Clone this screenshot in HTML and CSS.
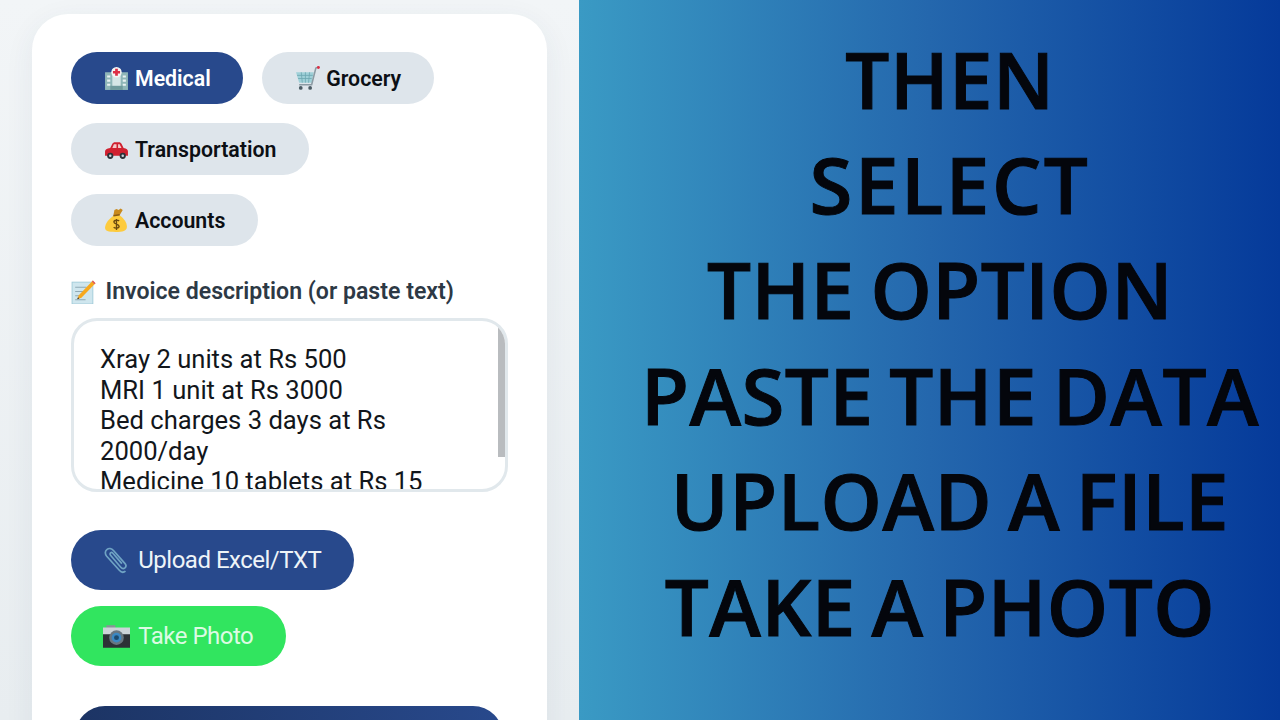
FILE: index.html
```html
<!DOCTYPE html>
<html lang="en">
<head>
<meta charset="utf-8">
<title>Invoice</title>
<link rel="stylesheet" href="styles.css">
</head>
<body>
<main class="page">
  <section class="left">
    <div class="card">
      <div class="chips">
        <button class="chip active"><svg class="ico" viewBox="0 0 24 24"><rect x="1" y="6" width="22" height="17" fill="#8fb6b8"/><rect x="8" y="3" width="8" height="20" fill="#d6e6e6"/><path d="M3 9h3v2H3zM3 13h3v2H3zM18 9h3v2h-3zM18 13h3v2h-3zM3 17h3v2H3zM18 17h3v2h-3z" fill="#e9f2f2"/><path d="M6 19h12v4H6z" fill="#6f9a9c"/><circle cx="12" cy="6" r="5" fill="#f4f4f4"/><path d="M10.7 2.6h2.6v2.1h2.1v2.6h-2.1v2.1h-2.6V7.3H8.6V4.7h2.1z" fill="#dd2e44"/></svg>Medical</button>
        <button class="chip"><svg class="ico" viewBox="0 0 24 24"><path d="M1 6h17l-2 10H4z" fill="#9fd0d8"/><path d="M2 9h15M3 12h13M6 6l1 10M10 6v10M14 6l-1 10" stroke="#6fa8b2" stroke-width=".8" fill="none"/><path d="M23 1l-3 1-4 16H4" stroke="#8a9aa3" stroke-width="1.5" fill="none"/><circle cx="22.5" cy="1.5" r="1.4" fill="#dd2e44"/><circle cx="5.5" cy="21" r="1.8" fill="#4a5a63"/><circle cx="14.5" cy="21" r="1.8" fill="#4a5a63"/></svg>Grocery</button>
        <button class="chip"><svg class="ico" viewBox="0 0 24 24"><path d="M1 14c0-2 1.500-3 5-3.500L8 6.500C8.500 5.500 9.500 5 10.500 5h4c1 0 1.800.5 2.300 1.500l2 4c3 .5 4.200 1.500 4.200 3.500v4H1z" fill="#d0202f"/><path d="M8 10.500l1.500-3.500h2.500v3.500zM13.500 7H15l1.800 3.500h-3.300z" fill="#f3c9c9"/><circle cx="6" cy="18" r="3" fill="#2b3238"/><circle cx="18" cy="18" r="3" fill="#2b3238"/><circle cx="6" cy="18" r="1.200" fill="#ccd6dd"/><circle cx="18" cy="18" r="1.200" fill="#ccd6dd"/></svg>Transportation</button>
        <button class="chip"><svg class="ico" viewBox="0 0 24 24"><path d="M10 7C5 10 1 15 1 19c0 3 3 4 10 4s11-1 11-5c0-4-3-8-7-11z" fill="#fdcb3e"/><path d="M9 7l6 0 3-5-2-1.500-2 1.500-2-1-2 1z" fill="#c98a1e"/><path d="M9 7.500l6-1" stroke="#8a5a12" stroke-width="1.400"/><path d="M14.500 12.500c-1-1.200-5-1.200-5 1 0 2.500 5 1.500 5 4 0 2.200-4 2.200-5.200 1M12 10.500v10.500" stroke="#6b4a10" stroke-width="1.300" fill="none"/></svg>Accounts</button>
      </div>
      <label class="field-label"><svg class="ico" viewBox="0 0 24 24"><rect x="1" y="3" width="20" height="21" fill="#cfe6ee" stroke="#9cc8d6" stroke-width=".8"/><path d="M4 8h11M4 12h8M4 16h6M4 20h10" stroke="#8fa9b5" stroke-width="1"/><path d="M21 1.500l2.500 2.500L10 18l-4 1.500L7.500 15.500z" fill="#f7a91e"/><path d="M20 2.500l1-1 2.500 2.500-1 1z" fill="#dd5a6a"/><path d="M6 19.500l.7-2 1.300 1.300z" fill="#333"/></svg>Invoice description (or paste text)</label>
      <div class="textarea">
        <div class="text">Xray 2 units at Rs 500<br>MRI 1 unit at Rs 3000<br>Bed charges 3 days at Rs 2000/day<br>Medicine 10 tablets at Rs 15</div>
        <span class="scrollbar"></span>
      </div>
      <div class="actions">
        <button class="action upload"><svg class="ico-sm" viewBox="0 0 24 24"><path d="M20 21.500c-1.800 1.500-4 1-5.500-.8L3.300 8.200C1.700 6.300 1.600 3.800 3.400 2.300 5.200.8 7.700 1.200 9.300 3.100l10.300 11.700c1 1.200 1 2.800-.1 3.800-1.100.9-2.700.6-3.700-.6L6.700 7.300c-.6-.7-.6-1.600 0-2.100.6-.5 1.500-.3 2.100.4l8 9.200" fill="none" stroke="#6fa3c4" stroke-width="1.500"/></svg>Upload Excel/TXT</button>
        <button class="action photo"><svg class="ico-sm" viewBox="0 0 24 24"><rect x="3" y="2" width="8" height="4" fill="#8a9299"/><rect x="0" y="4" width="24" height="7" fill="#ccd3d8"/><rect x="0" y="10" width="24" height="12" fill="#2d3136"/><circle cx="12" cy="13" r="6.500" fill="#697680"/><circle cx="12" cy="13" r="4.300" fill="#3b88c3"/><circle cx="12" cy="13" r="2.200" fill="#1c4a6e"/></svg>Take Photo</button>
      </div>
      <div class="submit"></div>
    </div>
  </section>
  <section class="right">
    <h1 class="headline">
      <span class="line">THEN</span>
      <span class="line wide">SELECT</span>
      <span class="line offset">THE OPTION</span>
      <span class="line">PASTE THE DATA</span>
      <span class="line">UPLOAD A FILE</span>
      <span class="line offset">TAKE A PHOTO</span>
    </h1>
  </section>
</main>
</body>
</html>
```
FILE: styles.css
```css
* { box-sizing: border-box; }
html, body { margin: 0; height: 100%; overflow: hidden; }
body { font-family: Roboto, "Liberation Sans", sans-serif; }
.page { display: flex; width: 1280px; height: 720px; overflow: hidden; }

.left {
  width: 579px;
  flex: none;
  padding: 14px 32px 0;
  background: linear-gradient(180deg, #f2f5f7 0%, #e8edf0 100%);
}
.card {
  height: 760px;
  padding: 38px 39px 0;
  background: #fff;
  border-radius: 36px;
  box-shadow: 0 8px 30px rgba(40, 70, 100, 0.07);
}
.chips { display: flex; flex-wrap: wrap; gap: 19px; width: 380px; }
.chip {
  display: flex;
  align-items: center;
  height: 52px;
  padding: 1px 32.500px 0;
  border: 0;
  border-radius: 26px;
  background: #dee5eb;
  color: #0c0f14;
  font: 600 21.300px/1 Roboto, sans-serif;
}
.chip.active { background: #28498c; color: #fff; }
.ico { width: 25px; height: 25px; margin-right: 6.500px; flex: none; }

.field-label {
  display: flex;
  align-items: center;
  height: 26px;
  margin-top: 32px;
  color: #2d3945;
  font-size: 23.100px;
  font-weight: 600;
}
.field-label .ico { margin-right: 9.500px; }

.textarea {
  position: relative;
  height: 174px;
  margin-top: 14px;
  padding: 23.400px 76px 0 26px;
  overflow: hidden;
  border: 3px solid #e1e8ec;
  border-radius: 26px;
  background: #fff;
}
.text { color: #12161b; font-size: 25.600px; line-height: 30.500px; }
.scrollbar {
  position: absolute;
  top: 0;
  right: 0;
  width: 7px;
  height: 136px;
  background: #b9bcbf;
}

.actions { display: flex; flex-direction: column; align-items: flex-start; gap: 16px; margin-top: 38px; }
.action {
  display: flex;
  align-items: center;
  height: 60px;
  padding: 0 32.300px;
  border: 0;
  border-radius: 30px;
  color: #eef4f8;
  font: 400 24px/1 Roboto, sans-serif;
  letter-spacing: -0.500px;
}
.action.upload { background: #28498c; }
.action.photo { background: #31e55f; color: #dcfbe3; }
.ico-sm { width: 27px; height: 27px; margin-right: 8px; flex: none; }

.submit {
  height: 60px;
  margin: 40px 5px 0 4px;
  border-radius: 30px;
  background: linear-gradient(90deg, #1c3464, #28498c);
}

.right {
  flex: 1;
  display: flex;
  justify-content: center;
  padding: 26.500px 0 0 41px;
  background: linear-gradient(90deg, #3a9ac4 0%, #2467ad 50%, #053a9a 100%);
}
.headline {
  margin: 0;
  display: flex;
  flex-direction: column;
  align-items: center;
  color: #04060c;
  font: 600 78px/105.400px "Open Sans", sans-serif;
  -webkit-text-stroke: 1px #04060c;
  letter-spacing: 0.500px;
  word-spacing: -5px;
  white-space: nowrap;
}
.line { display: block; white-space: pre; }
.line.wide { letter-spacing: 2.500px; }
.line.offset { padding-right: 20px; }
```
